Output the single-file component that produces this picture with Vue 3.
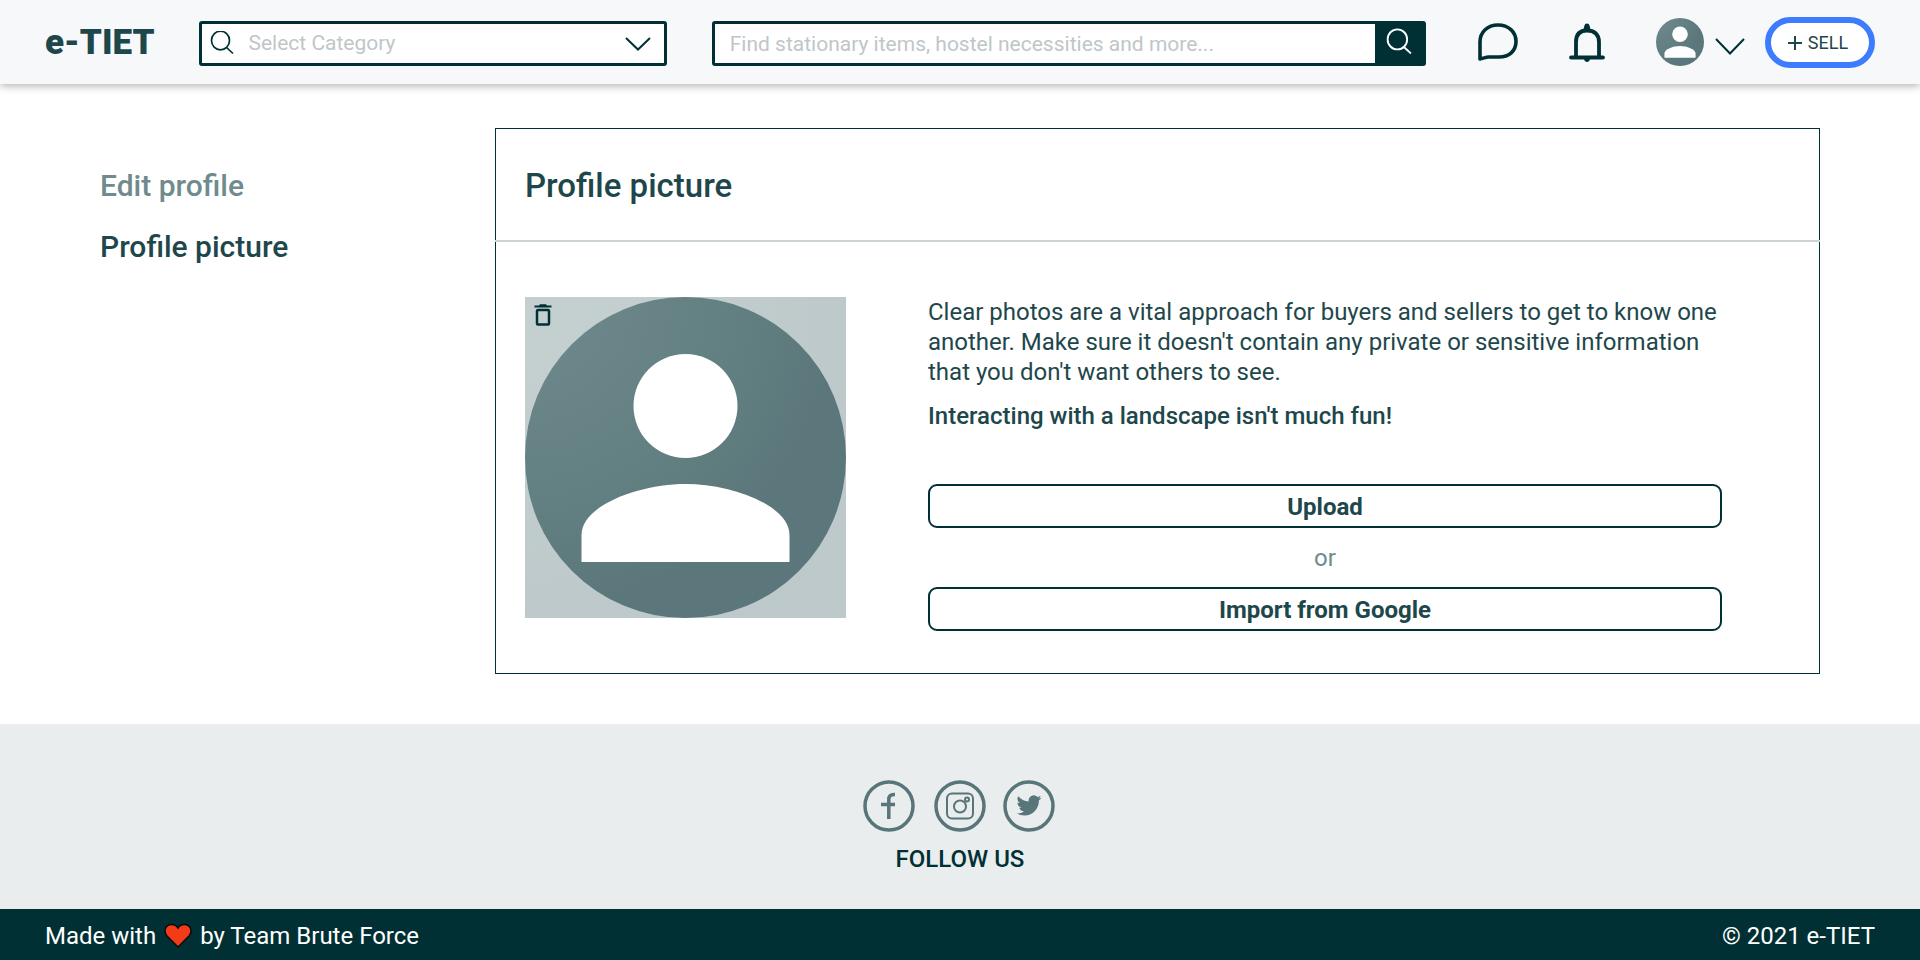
<script setup>
import { ref } from 'vue'

const category = ref('')
const query = ref('')
const categories = ['Stationery', 'Hostel necessities', 'Books']
</script>

<template>
  <div class="page">
    <header class="topbar">
      <a class="logo" href="#">e-TIET</a>

      <div class="fields">
        <div class="category">
          <svg class="glass" viewBox="0 0 24 24" aria-hidden="true">
            <ellipse cx="10.5" cy="9.5" rx="9" ry="9.3" />
            <path d="M16.5 16.5L23 22.5" />
          </svg>
          <select v-model="category" aria-label="Select Category">
            <option value="">Select Category</option>
            <option v-for="item in categories" :key="item" :value="item">{{ item }}</option>
          </select>
          <svg class="caret" viewBox="0 -2 26 16" aria-hidden="true">
            <path d="M1 1L13 12.5L25 1" />
          </svg>
        </div>

        <form class="search" role="search" @submit.prevent>
          <input v-model="query" type="text" aria-label="Search items" placeholder="Find stationary items, hostel necessities and more..." />
          <button type="submit" aria-label="Search">
            <svg class="glass" viewBox="0 0 24 24" aria-hidden="true">
              <ellipse cx="10.5" cy="10.5" rx="9" ry="9.3" />
              <path d="M16.5 17.5L23 23.5" />
            </svg>
          </button>
        </form>
      </div>

      <div class="actions">
        <button class="icon" type="button" aria-label="Messages">
          <svg width="40" height="40" viewBox="0 0 40 40" fill="none" stroke="#003034" stroke-width="3.6" stroke-linejoin="round" aria-hidden="true">
            <path d="M2 37V20C2 10 9.500 3 20 3S38 10 38 19.500S31 35 21 35H11C7.500 35 5 36.500 2 37Z" />
          </svg>
        </button>
        <button class="icon" type="button" aria-label="Notifications">
          <svg width="36" height="40" viewBox="0 0 36 40" fill="none" stroke="#003034" stroke-width="3.8" stroke-linecap="round" aria-hidden="true">
            <path d="M7 34V20C7 12 11 8.500 18 8.500S30 12 30 20V34M2 35.500H34" />
            <path d="M14 8C15.500 6.500 14.500 1.500 18 1.500S20.500 6.500 22 8Z" fill="#003034" stroke="none" />
            <path d="M15 36.500H21C21 41 15 41 15 36.500Z" fill="#003034" stroke="none" />
          </svg>
        </button>
        <button class="icon account" type="button" aria-label="Account">
          <svg width="48" height="48" viewBox="0 0 321 321" aria-hidden="true">
            <circle cx="160.500" cy="160.500" r="160.500" fill="url(#shade)" />
            <circle cx="160.500" cy="109" r="52" fill="#fff" />
            <path d="M56.500 265V238C56.500 208 115 187 160.500 187S264.500 208 264.500 238V265Z" fill="#fff" />
          </svg>
          <svg width="30" height="26" viewBox="0 -9 30 26" fill="none" stroke="#003034" stroke-width="2" aria-hidden="true">
            <path d="M1 1L15 15.500L29 1" />
          </svg>
        </button>
        <button class="sell" type="button">
          <svg width="14" height="14" viewBox="0 0 14 14" stroke="#1e474b" stroke-width="2" aria-hidden="true">
            <path d="M7 0V14M0 7H14" />
          </svg>
          SELL
        </button>
      </div>
    </header>

    <main class="content">
      <nav class="sidebar" aria-label="Profile settings">
        <a href="#">Edit profile</a>
        <a class="current" href="#" aria-current="page">Profile picture</a>
      </nav>

      <section class="card">
        <div class="card-head">
          <h1>Profile picture</h1>
        </div>
        <hr />
        <div class="card-body">
          <div class="picture">
            <svg class="portrait" viewBox="0 0 321 321" role="img" aria-label="Current profile picture">
              <defs>
                <radialGradient id="shade" cx="0" cy="0" r="1.300">
                  <stop offset="0.150" stop-color="#6c878a" />
                  <stop offset="0.500" stop-color="#627f81" />
                  <stop offset="0.750" stop-color="#5b777b" />
                </radialGradient>
              </defs>
              <rect width="321" height="321" fill="url(#shade)" opacity="0.400" />
              <circle cx="160.500" cy="160.500" r="160.500" fill="url(#shade)" />
              <circle cx="160.500" cy="109" r="52" fill="#fff" />
              <path d="M56.500 265V238C56.500 208 115 187 160.500 187S264.500 208 264.500 238V265Z" fill="#fff" />
            </svg>
            <button class="remove" type="button" aria-label="Delete picture">
              <svg width="18" height="22" viewBox="0 0 18 22" aria-hidden="true">
                <path d="M0.500 1.500H5L6 0.300H12L13 1.500H17.500V3.500H0.500Z" fill="#003034" />
                <rect x="3" y="6" width="12" height="14.500" rx="1" fill="none" stroke="#003034" stroke-width="2.500" />
              </svg>
            </button>
          </div>

          <div class="details">
            <p>Clear photos are a vital approach for buyers and sellers to get to know one another. Make sure it doesn't contain any private or sensitive information that you don't want others to see.</p>
            <p class="strong">Interacting with a landscape isn't much fun!</p>
            <button class="wide" type="button">Upload</button>
            <span class="or">or</span>
            <button class="wide" type="button">Import from Google</button>
          </div>
        </div>
      </section>
    </main>

    <footer>
      <div class="follow">
        <div class="social">
          <a href="#" aria-label="Facebook">
            <svg viewBox="0 0 52 52" aria-hidden="true">
              <circle class="ring" cx="25" cy="26" r="24" />
              <path class="line bold" d="M31 14.500H30C26.500 14.500 24.800 16.500 24.800 19.500V39M17 24.500H31" />
            </svg>
          </a>
          <a href="#" aria-label="Instagram">
            <svg viewBox="0 0 52 52" aria-hidden="true">
              <circle class="ring" cx="26" cy="26" r="24" />
              <rect class="line" x="13" y="13.500" width="26" height="25" rx="5" />
              <circle class="line" cx="26" cy="26.500" r="6" />
              <circle class="line" cx="33" cy="19.500" r="2" />
            </svg>
          </a>
          <a href="#" aria-label="Twitter">
            <svg viewBox="0 0 52 52" aria-hidden="true">
              <circle class="ring" cx="25" cy="26" r="24" />
              <path fill="#587579" transform="translate(12.500 13) scale(1.040)" d="M23.950 4.570a10 10 0 0 1-2.820.770 4.960 4.960 0 0 0 2.160-2.720 9.900 9.900 0 0 1-3.120 1.180 4.920 4.920 0 0 0-8.380 4.480C7.690 8.090 4.070 6.130 1.640 3.160a4.920 4.920 0 0 0 1.520 6.570 4.900 4.900 0 0 1-2.230-.610v.060a4.920 4.920 0 0 0 3.950 4.830 5 5 0 0 1-2.210.080 4.940 4.940 0 0 0 4.600 3.420A9.870 9.870 0 0 1 0 19.540a13.990 13.990 0 0 0 7.550 2.210c9.050 0 14-7.500 14-13.980 0-.210 0-.420-.010-.630a9.940 9.940 0 0 0 2.410-2.570z" />
            </svg>
          </a>
        </div>
        <h2>FOLLOW US</h2>
      </div>
      <div class="credits">
        <span class="made">
          Made with
          <svg width="28" height="26" viewBox="0 0 28 26" role="img" aria-label="love">
            <path d="M14 24L3 13C-1 8.500 1.500 1.500 7.500 1.500C10.500 1.500 12.700 3 14 5C15.300 3 17.500 1.500 20.500 1.500C26.500 1.500 29 8.500 25 13Z" fill="#f43b17" stroke="#0b0b0b" stroke-width="1.500" />
          </svg>
          by Team Brute Force
        </span>
        <span>© 2021 e-TIET</span>
      </div>
    </footer>
  </div>
</template>

<style>
body {
  background: #fff;
}
</style>

<style scoped>
.page {
  min-height: 100vh;
  display: flex;
  flex-direction: column;
  font-family: Roboto, "Liberation Sans", sans-serif;
  font-size: 24px;
  line-height: 30px;
  color: #1e474b;
}

* {
  box-sizing: border-box;
}

a {
  color: inherit;
  text-decoration: none;
}

button,
input,
select {
  font: inherit;
  color: inherit;
}

button {
  padding: 0;
  border: 0;
  background: none;
  cursor: pointer;
}

svg {
  display: block;
  flex: none;
}

.topbar {
  display: flex;
  align-items: center;
  height: 84px;
  padding: 0 45px;
  background: #f7f8fa;
  box-shadow: 0 2px 8px rgba(0, 0, 0, 0.3);
}

.logo {
  margin-right: 45px;
  padding-top: 2px;
  font-size: 35px;
  font-weight: 900;
}

.fields {
  display: grid;
  flex: 1;
  grid-template-columns: minmax(0, 467fr) minmax(0, 714fr);
  gap: 45px;
  padding-top: 2px;
}

.category,
.search {
  display: flex;
  align-items: center;
  height: 45px;
  border: 3px solid #003034;
  border-radius: 3px;
  background: #fff;
  font-size: 21px;
}

.category {
  padding: 0 13px 0 8px;
}

.glass {
  width: 24px;
  height: 24px;
  fill: none;
  stroke: #003034;
  stroke-width: 1.7;
}

.caret {
  width: 26px;
  height: 16px;
  fill: none;
  stroke: #003034;
  stroke-width: 2;
}

select {
  flex: 1;
  min-width: 0;
  margin-left: 14px;
  padding: 0;
  border: 0;
  appearance: none;
  background: none;
  color: #c0c6c8;
}

.search input {
  flex: 1;
  min-width: 0;
  height: 100%;
  padding: 2px 15px 0;
  border: 0;
  background: none;
}

.search input::placeholder {
  color: #c0c6c8;
}

.search button {
  display: flex;
  justify-content: center;
  width: 48px;
  height: 100%;
  padding-top: 4px;
  background: #003034;
}

.search .glass {
  width: 26px;
  height: 26px;
  stroke: #fff;
}

.actions {
  display: flex;
  align-items: center;
  margin-left: 52px;
}

.icon {
  display: flex;
  align-items: center;
  gap: 11px;
  margin-right: 51px;
}

.account {
  margin-right: 20px;
}

.sell {
  display: flex;
  align-items: center;
  justify-content: center;
  gap: 6px;
  width: 110px;
  height: 51px;
  padding: 2px 4px 0 0;
  border: 6px solid #3d7bff;
  border-radius: 26px;
  background: #fff;
  font-size: 18px;
}

.content {
  display: flex;
  align-items: flex-start;
  padding: 44px 100px 50px;
}

.sidebar {
  display: flex;
  flex: 395 1 0;
  flex-direction: column;
  gap: 25px;
  padding-top: 40px;
  font-size: 30px;
  font-weight: 500;
  line-height: 36px;
}

.sidebar a {
  color: #6f8b8e;
}

.sidebar .current {
  color: #1e474b;
}

.card {
  flex: 1325 1 0;
}

.card-head {
  padding: 37px 29px 35px;
  border: 1px solid #003034;
  border-bottom: 0;
}

h1 {
  margin: 0;
  font-size: 33px;
  font-weight: 500;
  line-height: 39px;
}

hr {
  height: 2px;
  margin: 0;
  border: 0;
  background: #cbd3d5;
}

.card-body {
  display: flex;
  align-items: flex-start;
  gap: 82px;
  padding: 55px 97px 42px 29px;
  border: 1px solid #003034;
  border-top: 0;
}

.picture {
  position: relative;
  flex: 321 1 0;
}

.portrait {
  width: 100%;
}

.remove {
  position: absolute;
  top: 7px;
  left: 9px;
}

.details {
  display: flex;
  flex: 794 1 0;
  flex-direction: column;
}

p {
  margin: 0 0 14px;
}

.strong {
  margin-bottom: 53px;
  font-weight: 500;
}

.wide {
  height: 44px;
  padding-top: 2px;
  border: 2px solid #003034;
  border-radius: 9px;
  font-weight: 700;
}

.or {
  padding: 15px 0 14px;
  text-align: center;
  color: #6f8b8e;
}

footer {
  display: flex;
  flex: 1;
  flex-direction: column;
}

.follow {
  display: flex;
  flex: 1;
  flex-direction: column;
  align-items: center;
  gap: 12px;
  padding-top: 56px;
  background: #e9edee;
}

.social {
  display: flex;
  gap: 18px;
}

.social svg {
  width: 52px;
  height: 52px;
  overflow: visible;
}

.ring,
.line {
  fill: none;
  stroke: #587579;
}

.ring {
  stroke-width: 3.5;
}

.line {
  stroke-width: 2;
}

.bold {
  stroke-width: 3.5;
}

h2 {
  margin: 0;
  font-size: 24px;
  font-weight: 500;
  color: #003034;
}

.credits {
  display: flex;
  align-items: center;
  justify-content: space-between;
  height: 51px;
  padding: 2px 45px 0;
  background: #003034;
  color: #fff;
}

.made {
  display: flex;
  align-items: center;
  gap: 8px;
}
</style>
